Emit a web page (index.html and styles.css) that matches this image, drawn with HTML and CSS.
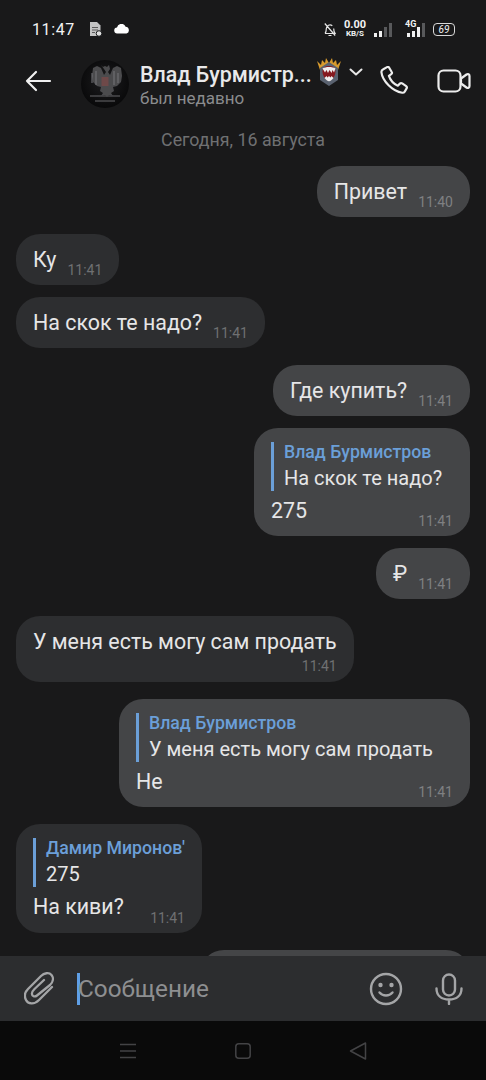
FILE: index.html
```html
<!DOCTYPE html>
<html lang="ru">
<head>
  <meta charset="UTF-8" />
  <title>Влад Бурмистров</title>
  <link rel="stylesheet" href="styles.css">
</head>
<body>
  <div class="phone">
    <div class="statusBar">
      <div class="statusLeft">
        <span class="clock">11:47</span>
        <svg width="13" height="16" viewBox="0 0 13 16"><path d="M1 1h7l3.500 3.500V15H1z" fill="#c4c4c4"/><path d="M3 6.500h6M3 9h6M3 11.500h3" stroke="#5a5a5a" stroke-width="1.100"/><circle cx="10" cy="12.500" r="2.800" fill="#e0e0e0" stroke="#191a1b"/></svg>
        <svg width="16" height="10" viewBox="0 0 16 10"><path d="M3.500 9.500a3 3 0 0 1-.5-6 4.500 4.500 0 0 1 8.600-.8A3.500 3.500 0 0 1 12.500 9.500z" fill="#fff"/></svg>
      </div>
      <div class="statusRight">
        <svg width="12" height="15" viewBox="0 0 12 15" fill="none" stroke="#e6e6e6" stroke-width="1.200"><path d="M1 11.500c1-1 1.300-2.500 1.300-5a3.700 3.700 0 0 1 6-2.700M9.700 6.500c0 2 .4 3.800 1.400 5H1M4.500 13.500h3M.8 1.500l10.400 12"/></svg>
        <div class="netSpeed"><b>0.00</b><b class="small">KB/S</b></div>
        <div class="signal"><i class="s1 on"></i><i class="s2 on"></i><i class="s3"></i><i class="s4"></i></div>
        <div class="signal second"><span class="fourG">4G</span><i class="s1 on"></i><i class="s2 on"></i><i class="s3 on"></i><i class="s4"></i></div>
        <div class="battery">69</div>
      </div>
    </div>

    <div class="header">
      <svg class="backIcon" width="28" height="24" viewBox="0 0 28 24" fill="none" stroke="#f0f0f0" stroke-width="2.200" stroke-linecap="round" stroke-linejoin="round"><path d="M26 12H3M12 3l-9 9 9 9"/></svg>
      <div class="avatar">
        <svg width="48" height="48" viewBox="0 0 48 48">
          <defs>
            <radialGradient id="avatarBg" cx="50%" cy="45%" r="55%"><stop offset="0" stop-color="#1d1d1f"/><stop offset="1" stop-color="#09090a"/></radialGradient>
            <filter id="soft"><feGaussianBlur stdDeviation="0.5"/></filter>
          </defs>
          <circle cx="24" cy="24" r="24" fill="url(#avatarBg)"/>
          <g filter="url(#soft)">
            <path d="M20 5l2 2 2-1 2 1 2-2 1 4-2 3 2 3 3-7 4-2 4 2 1 8-1 6-4 4-4 1 1 4-3 2 2 3-4-1-2 2-2-2-4 1 2-3-3-2 1-4-4-1-4-4-1-6 1-8 4-2 4 2 3 7 2-3-2-3z" fill="#4b4b4e"/>
            <path d="M11 13v10M15 11v14M37 13v10M33 11v14" stroke="#77777a" stroke-width="1"/>
            <rect x="20.500" y="17" width="7" height="9" fill="#6e4a48"/>
            <path d="M9 36h30M14 41h20" stroke="#4a4a4c" stroke-width="1.400"/>
          </g>
        </svg>
      </div>
      <div class="peer">
        <div class="peerLine">
          <span class="peerName">Влад Бурмистр...</span>
          <svg class="badge" width="26" height="28" viewBox="0 0 26 28"><path d="M1 3l4 4 1-5 3 3 1-5 3 5 3-5 1 5 3-3 1 5 4-4-3 9H4z" fill="#d69a2e"/><path d="M13 4l9 6v12l-9 6-9-6V10z" fill="#5a6270"/><path d="M13 8c4 0 6.500 1.500 6.500 5.500s-2.500 8-6.500 9.500c-4-1.500-6.500-5.500-6.500-9.500S9 8 13 8z" fill="#86191f"/><path d="M6.500 10.500c3-2 10-2 13 0l-1.500 4-1.500-2.500-1 3-2-3-1.500 3-1.500-3-1.500 2.500zM8.500 20l2-2 1 1.500 1.500-1.500 1.500 1.500 1-1.500 2 2c-1.500 2-3 3-4.500 3.300-1.500-.3-3-1.300-4.500-3.300z" fill="#eeeeee"/></svg>
          <svg class="chevron" width="14" height="8" viewBox="0 0 14 8" fill="none" stroke="#e8e8e8" stroke-width="2" stroke-linecap="round" stroke-linejoin="round"><path d="M1.500 1.500L7 6.500l5.500-5"/></svg>
        </div>
        <div class="peerStatus">был недавно</div>
      </div>
      <svg class="callIcon" width="30" height="30" viewBox="0 0 32 32" fill="none" stroke="#ededed" stroke-width="2.300" stroke-linejoin="round"><path d="M3.500 3.500l4-2.300c1-.5 1.800-.2 2.300.6l2.700 4.600c.5.800.3 1.700-.5 2.300l-2.500 1.800c1.500 4.500 5 8.500 9.500 10.500l2.200-2.200c.8-.7 1.700-.7 2.500-.2l4.200 2.900c.8.600 1 1.500.5 2.400l-2 3.400c-.6.900-1.500 1.400-2.700 1.200C13.500 27 2.500 16 1.500 6.500c-.1-1.300.7-2.300 2-3z"/></svg>
      <svg class="videoIcon" width="34" height="24" viewBox="0 0 34 24" fill="none" stroke="#ededed" stroke-width="2.200" stroke-linejoin="round"><rect x="1.500" y="1.500" width="22" height="21" rx="5"/><path d="M24 9.500l5.500-4c1.500-1 3-.3 3 1.500v10c0 1.800-1.500 2.500-3 1.500l-5.500-4z"/></svg>
    </div>

    <div class="messages">
      <div class="dateLabel">Сегодня, 16 августа</div>

      <div class="bubble out first"><span class="text">Привет</span><span class="time">11:40</span></div>

      <div class="bubble in newSender"><span class="text">Ку</span><span class="time">11:41</span></div>
      <div class="bubble in"><span class="text">На скок те надо?</span><span class="time">11:41</span></div>

      <div class="bubble out newSender"><span class="text">Где купить?</span><span class="time">11:41</span></div>
      <div class="bubble out tall replyShort">
        <div class="reply">
          <div class="replyName">Влад Бурмистров</div>
          <div class="replyText">На скок те надо?</div>
        </div>
        <div class="text">275</div>
        <span class="time">11:41</span>
      </div>
      <div class="bubble out"><span class="text">₽</span><span class="time">11:41</span></div>

      <div class="bubble in newSender wrapTime">
        <div class="text">У меня есть могу сам продать</div>
        <div class="time">11:41</div>
      </div>

      <div class="bubble out newSender tall replyLong">
        <div class="reply">
          <div class="replyName">Влад Бурмистров</div>
          <div class="replyText">У меня есть могу сам продать</div>
        </div>
        <div class="text">Не</div>
        <span class="time">11:41</span>
      </div>

      <div class="bubble in newSender tall longer">
        <div class="reply">
          <div class="replyName">Дамир Миронов'</div>
          <div class="replyText">275</div>
        </div>
        <div class="text">На киви?</div>
        <span class="time">11:41</span>
      </div>

      <div class="bubble out newSender cutOff"></div>
    </div>

    <div class="composer">
      <svg class="clip" width="30" height="33" viewBox="0 0 30 33" fill="none" stroke="#a4a5a7" stroke-width="2.300" stroke-linecap="round" stroke-linejoin="round"><path d="M28 15L15 28C10 33 4 32 2 28C0 24 1 20 4 17L17 4C20 1 25 0 27.500 3C30 6 29 10 26 13L13 23.500C10.500 25.500 8 24 8 22C7.500 20 9 18.500 10.500 17L20 8"/></svg>
      <div class="inputBox">
        <span class="caret"></span>
        <span class="placeholder">Сообщение</span>
      </div>
      <svg class="smile" width="34" height="34" viewBox="0 0 34 34" fill="none" stroke="#a4a5a7" stroke-width="2.400" stroke-linecap="round"><circle cx="17" cy="17" r="15"/><path d="M10.500 20.500c3.500 4 9.500 4 13 0"/><circle cx="11.500" cy="13" r="1" fill="#a4a5a7"/><circle cx="22.500" cy="13" r="1" fill="#a4a5a7"/></svg>
      <svg class="mic" width="28" height="32" viewBox="0 0 28 32" fill="none" stroke="#a4a5a7" stroke-width="2.400" stroke-linecap="round"><rect x="8" y="1.500" width="12" height="21" rx="6"/><path d="M1.500 15.500c0 7 5 11 12.500 11s12.500-4 12.500-11M14 27v4"/></svg>
    </div>

    <div class="navBar">
      <svg width="18" height="16" viewBox="0 0 18 16" stroke="#434345" stroke-width="1.500"><path d="M1 1.500h16M1 8h16M1 14.500h16"/></svg>
      <svg width="16" height="16" viewBox="0 0 16 16" fill="none" stroke="#434345" stroke-width="1.500"><rect x=".8" y=".8" width="14.400" height="14.400" rx="3"/></svg>
      <svg width="18" height="18" viewBox="0 0 18 18" fill="none" stroke="#434345" stroke-width="1.500" stroke-linejoin="round"><path d="M16.500 1v16L1.500 9z"/></svg>
    </div>
  </div>
</body>
</html>
```

FILE: styles.css
```css
html, body {
  margin: 0;
  padding: 0;
  background: #19191a;
  font-family: Roboto, "Liberation Sans", sans-serif;
}

.phone {
  width: 486px;
  height: 1080px;
  display: flex;
  flex-direction: column;
  overflow: hidden;
  background: #19191a;
}

/* status bar */
.statusBar {
  height: 58px;
  flex: none;
  display: flex;
  justify-content: space-between;
  align-items: center;
  padding: 0 31px 0 32px;
  box-sizing: border-box;
  color: #f2f2f2;
}

.statusLeft, .statusRight {
  display: flex;
  align-items: center;
}

.statusLeft { gap: 12px; }
.statusRight { gap: 8px; }

.clock {
  font-size: 16px;
  letter-spacing: 0.6px;
  margin-right: 2px;
}

.netSpeed {
  display: flex;
  flex-direction: column;
  align-items: center;
  line-height: 9px;
}

.netSpeed b { font-size: 11px; font-weight: 700; }
.netSpeed .small { font-size: 8px; }

.signal {
  display: flex;
  align-items: flex-end;
  gap: 2px;
  height: 15px;
  position: relative;
}

.signal i {
  display: block;
  width: 3px;
  background: #58595b;
}

.signal .on { background: #f0f0f0; }
.signal .s1 { height: 4px; }
.signal .s2 { height: 6px; }
.signal .s3 { height: 10px; }
.signal .s4 { height: 14px; }

.signal.second { padding-left: 7px; }

.fourG {
  position: absolute;
  left: 5px;
  top: -3px;
  font-size: 9px;
  font-weight: 700;
}

.battery {
  width: 20px;
  height: 11px;
  border: 1.5px solid #d8d8d8;
  border-radius: 4px;
  font-size: 10px;
  line-height: 11px;
  text-align: center;
  font-style: italic;
}

/* header */
.header {
  height: 46px;
  margin-bottom: 16px;
  flex: none;
  display: flex;
  align-items: center;
  padding-left: 24px;
  box-sizing: border-box;
}

.backIcon { flex: none; }

.avatar {
  width: 48px;
  height: 48px;
  margin-left: 29px;
  margin-top: 6px;
  flex: none;
}

.peer {
  width: 240px;
  margin-left: 11px;
  margin-top: 4px;
  flex: none;
}

.peerLine {
  display: flex;
  align-items: center;
  height: 30px;
}

.peerName {
  font-size: 21.400px;
  font-weight: 500;
  color: #e9e9ea;
  white-space: nowrap;
}

.badge { margin-left: 4px; margin-top: -4px; flex: none; }
.chevron { margin-left: 7px; margin-top: -4px; flex: none; }

.peerStatus {
  font-size: 17px;
  color: #8b8c8e;
  line-height: 18px;
}

.callIcon { flex: none; }
.videoIcon { margin-left: 27px; flex: none; }

/* messages */
.messages {
  flex: 1;
  min-height: 0;
  overflow: hidden;
  display: flex;
  flex-direction: column;
  padding: 0 16px;
}

.dateLabel {
  height: 40px;
  line-height: 40px;
  flex: none;
  text-align: center;
  font-size: 17.800px;
  color: #6f7072;
}

.bubble {
  flex: none;
  position: relative;
  box-sizing: border-box;
  border-radius: 24px;
  min-height: 51px;
  margin-top: 12px;
  padding: 12px 17px 0;
  font-size: 21.400px;
  line-height: 27px;
  color: #e6e6e7;
  display: flex;
}

.bubble.first { margin-top: 6px; }
.bubble.newSender { margin-top: 17px; }

.bubble.in {
  align-self: flex-start;
  background: #2d2e30;
}

.bubble.out {
  align-self: flex-end;
  background: #444547;
}

.time {
  font-size: 14px;
  line-height: 16px;
  margin-left: 11px;
  align-self: flex-end;
  padding-bottom: 7px;
}

.bubble.in .time { color: #6f7072; }
.bubble.out .time { color: #7f8082; }

.bubble.wrapTime {
  flex-direction: column;
  height: 66px;
}

.bubble.wrapTime .time {
  margin-top: 3px;
  padding-bottom: 0;
}

.bubble.tall {
  display: block;
  height: 108px;
}

.bubble.tall.longer { height: 109px; width: 186px; }
.bubble.replyShort { width: 216px; }
.bubble.replyLong { width: 351px; }

.bubble.tall > .time {
  position: absolute;
  right: 17px;
  bottom: 7px;
  padding: 0;
}

.reply {
  border-left: 3px solid #6b9fd8;
  padding-left: 10px;
  margin-bottom: 6px;
  margin-top: 2px;
}

.replyName {
  font-size: 17.700px;
  font-weight: 500;
  line-height: 20px;
  color: #6b9fd8;
  white-space: nowrap;
}

.replyText {
  font-size: 20px;
  line-height: 26px;
  padding-top: 3px;
  white-space: nowrap;
}

.bubble.cutOff {
  width: 270px;
  height: 50px;
}

/* composer */
.composer {
  height: 65px;
  flex: none;
  background: #2c2d2f;
  display: flex;
  align-items: center;
  padding: 0 23px 0 24px;
  box-sizing: border-box;
  position: relative;
}

.clip { flex: none; }

.inputBox {
  flex: 1;
  display: flex;
  align-items: center;
  margin-left: 23px;
  font-size: 24.300px;
  color: #8e8f91;
}

.caret {
  width: 3px;
  height: 32px;
  background: #5f9fe6;
  margin-right: -2px;
}

.smile { margin-right: 32px; }

/* nav bar */
.navBar {
  height: 59px;
  flex: none;
  background: #0a0a0a;
  display: flex;
  justify-content: center;
  align-items: center;
  gap: 98px;
}
```
